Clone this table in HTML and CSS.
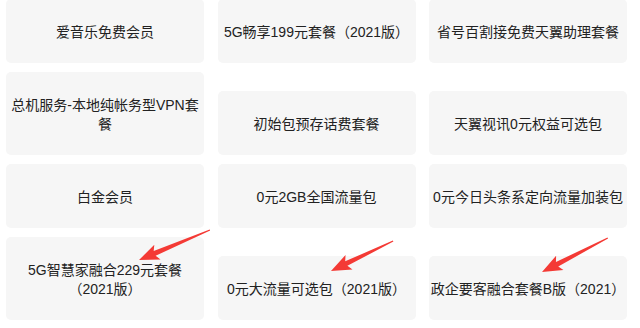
FILE: index.html
```html
<!DOCTYPE html>
<html lang="zh-CN">
<head>
<meta charset="utf-8">
<title>套餐列表</title>
<link rel="stylesheet" href="styles.css">
</head>
<body>
<div class="page">
  <div class="grid">
    <div class="card">爱音乐免费会员</div>
    <div class="card">5G畅享199元套餐（2021版）</div>
    <div class="card">省号百割接免费天翼助理套餐</div>
    <div class="card">总机服务-本地纯帐务型VPN套餐</div>
    <div class="card">初始包预存话费套餐</div>
    <div class="card">天翼视讯0元权益可选包</div>
    <div class="card">白金会员</div>
    <div class="card">0元2GB全国流量包</div>
    <div class="card">0元今日头条系定向流量加装包</div>
    <div class="card">5G智慧家融合229元套餐（2021版）</div>
    <div class="card">0元大流量可选包（2021版）</div>
    <div class="card">政企要客融合套餐B版（2021）</div>
  </div>
  <svg class="arrows" width="640" height="328" viewBox="0 0 640 328" aria-hidden="true">
    <g transform="translate(139 260) rotate(-22.9)">
      <polygon class="arrow" points="0,0 20,-8 17,-2.5 77,-0.6 77,0.6 17,2.5 20,8"/>
    </g>
    <g transform="translate(331 271) rotate(-25.8)">
      <polygon class="arrow" points="0,0 20,-8 17,-2.5 69,-0.6 69,0.6 17,2.5 20,8"/>
    </g>
    <g transform="translate(542 272) rotate(-27.3)">
      <polygon class="arrow" points="0,0 20,-8 17,-2.5 74,-0.6 74,0.6 17,2.5 20,8"/>
    </g>
  </svg>
</div>
</body>
</html>
```
FILE: styles.css
```css
html, body {
  margin: 0;
  padding: 0;
  background: #ffffff;
}
.page {
  position: relative;
  width: 640px;
  height: 328px;
  overflow: hidden;
}
.grid {
  display: grid;
  grid-template-columns: repeat(3, 198px);
  column-gap: 13.5px;
  row-gap: 9px;
  align-items: end;
  margin-top: -1px;
  padding-left: 6px;
}
.card {
  background: #f6f6f6;
  border-radius: 5px;
  padding: 23.5px 1px 21.5px;
  line-height: 19px;
  font-family: "Liberation Sans", "Noto Sans CJK SC", sans-serif;
  font-size: 14px;
  color: #222222;
  text-align: center;
}
.arrows {
  position: absolute;
  left: 0;
  top: 0;
  pointer-events: none;
}
.arrow {
  fill: #f43a35;
}
```
